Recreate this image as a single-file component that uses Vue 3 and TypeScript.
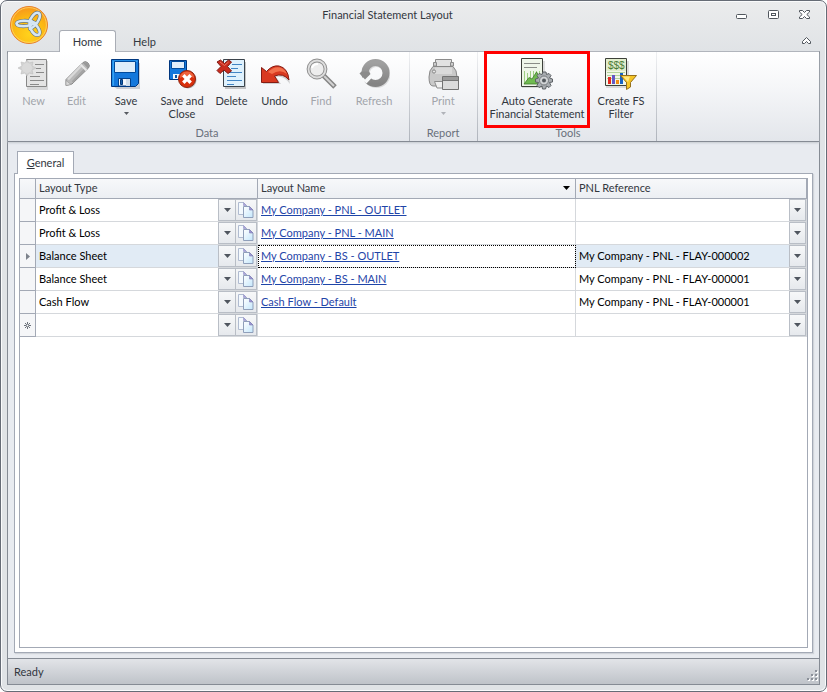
<script setup lang="ts">
import { ref } from 'vue'

interface Command {
  id: string
  lines: string[]
  size: 'small' | 'mid' | 'wide' | 'large' | 'tool'
  disabled?: boolean
  menu?: boolean
  highlighted?: boolean
}
interface Group {
  title: string
  commands: Command[]
}
interface Row {
  type: string
  name: string
  reference: string
}

const groups: Group[] = [
  {
    title: 'Data',
    commands: [
      { id: 'new', lines: ['New'], size: 'small', disabled: true },
      { id: 'edit', lines: ['Edit'], size: 'small', disabled: true },
      { id: 'save', lines: ['Save'], size: 'wide', menu: true },
      { id: 'save-close', lines: ['Save and', 'Close'], size: 'wide' },
      { id: 'delete', lines: ['Delete'], size: 'small' },
      { id: 'undo', lines: ['Undo'], size: 'small' },
      { id: 'find', lines: ['Find'], size: 'mid', disabled: true },
      { id: 'refresh', lines: ['Refresh'], size: 'wide', disabled: true },
    ],
  },
  {
    title: 'Report',
    commands: [{ id: 'print', lines: ['Print'], size: 'wide', disabled: true, menu: true }],
  },
  {
    title: 'Tools',
    commands: [
      { id: 'generate', lines: ['Auto Generate', 'Financial Statement'], size: 'large', highlighted: true },
      { id: 'filter', lines: ['Create FS', 'Filter'], size: 'tool' },
    ],
  },
]

const types = ['Profit & Loss', 'Balance Sheet', 'Cash Flow']
const references = ['My Company - PNL - FLAY-000001', 'My Company - PNL - FLAY-000002']

const rows = ref<Row[]>([
  { type: 'Profit & Loss', name: 'My Company - PNL - OUTLET', reference: '' },
  { type: 'Profit & Loss', name: 'My Company - PNL - MAIN', reference: '' },
  { type: 'Balance Sheet', name: 'My Company - BS - OUTLET', reference: references[1] },
  { type: 'Balance Sheet', name: 'My Company - BS - MAIN', reference: references[0] },
  { type: 'Cash Flow', name: 'Cash Flow - Default', reference: references[0] },
  { type: '', name: '', reference: '' },
])
const current = ref(2)
</script>

<template>
  <div class="window">
    <header class="titlebar">
      <button class="app-button" type="button" aria-label="Application menu">
        <svg width="40" height="40" viewBox="0 0 40 40">
          <defs>
            <radialGradient id="orb" cx="50%" cy="75%" r="75%">
              <stop offset="0" stop-color="#ffd21c" />
              <stop offset="0.6" stop-color="#fcb813" />
              <stop offset="1" stop-color="#f7941d" />
            </radialGradient>
          </defs>
          <circle cx="20" cy="20" r="18.500" fill="url(#orb)" stroke="#e8812c" />
          <circle cx="20" cy="20" r="17.400" fill="none" stroke="#ffd768" stroke-width="0.800" />
          <g fill="none" stroke-linejoin="round">
            <g stroke="#66767e" stroke-width="3.800">
              <path d="M26 18C19 14.500 8 15.500 7.500 18.500C8 22 19 22.500 26 18Z" />
              <path d="M21 21C18.500 15 26 6.500 29.500 8C33 10 29 20 21 24Z" />
              <path d="M22 16C28 19 32.500 27 30 29.500C26 31.500 19 25 22 16Z" />
            </g>
            <g stroke="#d5e6f4" stroke-width="2.600">
              <path d="M26 18C19 14.500 8 15.500 7.500 18.500C8 22 19 22.500 26 18Z" />
              <path d="M21 21C18.500 15 26 6.500 29.500 8C33 10 29 20 21 24Z" />
              <path d="M22 16C28 19 32.500 27 30 29.500C26 31.500 19 25 22 16Z" />
            </g>
          </g>
        </svg>
      </button>
      <h1 class="title">Financial Statement Layout</h1>
      <div class="window-controls">
        <button type="button" aria-label="Minimize">
          <svg width="13" height="12" viewBox="0 0 13 12"><rect x="0.500" y="4.500" width="10" height="4" rx="1" fill="#fff" stroke="#50565d" /></svg>
        </button>
        <button type="button" aria-label="Maximize">
          <svg width="13" height="12" viewBox="0 0 13 12" fill="#fff" stroke="#50565d"><rect x="1.500" y="0.500" width="10" height="8" rx="1" /><rect x="4.500" y="3.500" width="4" height="2" /></svg>
        </button>
        <button type="button" aria-label="Close">
          <svg width="13" height="12" viewBox="0 0 13 12"><path d="M1.500 0.500H4.500L6.500 2.500L8.500 0.500H11.500V2L8.800 4.500L11.500 7V8.500H8.500L6.500 6.500L4.500 8.500H1.500V7L4.200 4.500L1.500 2Z" fill="#fff" stroke="#50565d" /></svg>
        </button>
      </div>
    </header>

    <nav class="ribbon-tabs">
      <button class="ribbon-tab active" type="button">Home</button>
      <button class="ribbon-tab" type="button">Help</button>
      <button class="collapse" type="button" aria-label="Collapse ribbon">
        <svg width="11" height="9" viewBox="0 0 11 9"><path d="M1.500 5.500L5.500 1.500L9.500 5.500V7.500H7.500L5.500 5.500L3.500 7.500H1.500Z" fill="#fff" stroke="#50565d" /></svg>
      </button>
    </nav>

    <div class="frame">
      <section class="ribbon">
        <div v-for="group in groups" :key="group.title" class="group">
          <div class="commands">
            <button
              v-for="command in group.commands"
              :key="command.id"
              type="button"
              class="command"
              :class="[command.size, { highlighted: command.highlighted }]"
              :disabled="command.disabled"
            >
              <svg v-if="command.id === 'new'" width="32" height="32" viewBox="0 0 32 32">
                <path d="M9 3H30V32H9Z" fill="#b9b9b9" opacity="0.5" />
                <path d="M8.500 1.500H28.500V28.500H8.500Z" fill="#e4e4e4" stroke="#878787" />
                <path d="M17 6.500H26M18 10.500H23M18 14.500H26M12 18.500H22M12 22.500H26M12 26.500H21" stroke="#8a8a8a" />
                <path d="M9 2L11 5L15 4L14 8L18 10L14 12L15 16L11 15L9 18L7 15L3 16L4 12L0 10L4 8L3 4L7 5Z" fill="#d2d2d2" stroke="#bdbdbd" stroke-width="0.600" />
                <circle cx="9" cy="10" r="5" fill="#dadada" />
              </svg>
              <svg v-else-if="command.id === 'edit'" width="32" height="32" viewBox="0 0 32 32">
                <path d="M22 4.500Q24.500 2.500 27 5Q29.500 7.500 27.500 10L11 26L5 27.500L5 21.500Z" fill="#b9b9b9" stroke="#868686" stroke-linejoin="round" />
                <path d="M20 8L7 21.500" stroke="#d9d9d9" stroke-width="2.500" />
                <path d="M24 11L11.500 24" stroke="#a3a3a3" stroke-width="2" />
                <path d="M19.500 6.500L25.500 12.500" stroke="#e8e8e8" stroke-width="2" />
                <path d="M22 5Q25 3 27 6Q29 8 27 10.500Z" fill="#999" />
                <path d="M5 22.500L10 26.500L5 27.500Z" fill="#d8d8d8" stroke="#999" stroke-width="0.600" />
              </svg>
              <svg v-else-if="command.id === 'save'" width="32" height="32" viewBox="0 0 32 32">
                <path d="M3 5H30V31H7L3 28Z" fill="#8d949e" opacity="0.4" />
                <path d="M1.500 1.500H28.500V25.500L25.500 28.500H1.500Z" fill="#1478dc" stroke="#00377f" />
                <path d="M2.500 2.500H27.500V4H4V27.500H2.500Z" fill="#35a3f4" />
                <path d="M4.500 3.500H25.500V14.500H4.500Z" fill="#deedfa" stroke="#004a9c" />
                <path d="M8.500 20.500H20.500V28H8.500Z" fill="#f1f6fc" stroke="#00418c" />
                <path d="M10.500 21.500H12.500V26.500H10.500Z" fill="#155fac" stroke="#003779" />
                <path d="M16 21H20V28H16Z" fill="#cfdeec" />
              </svg>
              <svg v-else-if="command.id === 'save-close'" width="32" height="32" viewBox="0 0 32 32">
                <path d="M3.500 2.500H20.500V21.500H3.500Z" fill="#1478dc" stroke="#00377f" />
                <path d="M5.500 3.500H18.500V10.500H5.500Z" fill="#e0eefb" stroke="#004a9c" />
                <path d="M7 16H16V21H7Z" fill="#f2f7fc" />
                <path d="M9 17H11V20H9Z" fill="#07549f" />
                <circle cx="22" cy="22" r="8.500" fill="#777" opacity="0.5" />
                <circle cx="21" cy="21" r="8.500" fill="#d92f0c" stroke="#8e2410" />
                <path d="M14 20Q14 14 21 13.500Q28 14 28 20Q21 16 14 20" fill="#f67850" opacity="0.7" />
                <path d="M18.500 18.500L23.500 23.500M23.500 18.500L18.500 23.500" stroke="#fff" stroke-width="3.400" stroke-linecap="square" />
              </svg>
              <svg v-else-if="command.id === 'delete'" width="32" height="32" viewBox="0 0 32 32">
                <path d="M9 4H30V31H9Z" fill="#777" opacity="0.4" />
                <path d="M7.500 1.500H28.500V28.500H7.500Z" fill="#dff1fd" stroke="#3a434b" />
                <path d="M16 6.500H26M15 10.500H22M11 14.500H26M11 18.500H20M11 22.500H26M11 26.500H18" stroke="#4285c4" />
                <path d="M1 4L4.500 2L8.500 5.500L12.500 2L15.500 4L11.500 8.500L15.500 13L12 15.500L8 12L4 15.500L1 12.500L5 8.500Z" fill="#c92c1f" stroke="#7e1b14" />
                <path d="M4 4L8.500 7.500L12.500 4" fill="none" stroke="#ec705d" />
              </svg>
              <svg v-else-if="command.id === 'undo'" width="32" height="32" viewBox="0 0 32 32">
                <path d="M4 11L9 15Q14 9 21 10Q30 13 31 26Q25 17 17 19L22 26H4Z" fill="#888" opacity="0.35" />
                <path d="M2.500 9.500L7.500 13.500Q13 7 20 8Q29 10 30 22Q24 14.500 15.500 18L19.500 24.500H2.500Z" fill="#d93920" stroke="#861c13" />
                <path d="M9 14Q15 8 21 9.500Q26 11 28 16Q21 10.500 13 16Z" fill="#f3714d" />
              </svg>
              <svg v-else-if="command.id === 'find'" width="32" height="32" viewBox="0 0 32 32" fill="none">
                <path d="M18 17L30 29" stroke="#858585" stroke-width="5" />
                <path d="M18 17L29 28" stroke="#d3d3d3" stroke-width="2" />
                <circle cx="12" cy="11" r="8.500" fill="#ededed" stroke="#8f8f8f" stroke-width="3.800" />
                <circle cx="12" cy="11" r="8.500" stroke="#dedede" stroke-width="1.800" />
                <path d="M7 10Q8 6 13 6" stroke="#fff" stroke-width="2" />
              </svg>
              <svg v-else-if="command.id === 'refresh'" width="32" height="32" viewBox="0 0 32 32" fill="none">
                <defs>
                  <linearGradient id="ring" x1="0" y1="0" x2="0" y2="1">
                    <stop offset="0" stop-color="#a0a0a0" />
                    <stop offset="1" stop-color="#848484" />
                  </linearGradient>
                </defs>
                <circle cx="18.500" cy="16" r="10.500" stroke="#999" stroke-width="7" opacity="0.300" />
                <circle cx="17.500" cy="15" r="10.500" stroke="url(#ring)" stroke-width="7" />
                <path d="M2 20.500L13 16.500L15 18.500L8.500 25.500Z" fill="#f8f9fa" />
                <path d="M1.500 15.500L3.500 13.500H11L12.500 16L7 21.500Z" fill="#8b8b8b" />
              </svg>
              <svg v-else-if="command.id === 'print'" width="32" height="32" viewBox="0 0 32 32">
                <path d="M8.500 1.500H24.500V9H8.500Z" fill="#e2e2e2" stroke="#8b8b8b" />
                <path d="M6.500 4.500H9.500V8H6.500ZM23.500 4.500H26.500V8H23.500Z" fill="#ccc" stroke="#8c8c8c" />
                <path d="M6 8.500H26Q30 12 30 19Q30 28 26 28H6Q2 28 2 19Q2 12 6 8.500Z" fill="#c9c9c9" stroke="#888" />
                <path d="M8 9.500H25V16H8Z" fill="#dadada" />
                <path d="M7.500 23.500H16V30H10Z" fill="#efefef" stroke="#8d8d8d" />
                <circle cx="7" cy="13.500" r="1.600" fill="#e5e5e5" stroke="#888" />
                <path d="M15.500 18.500H31.500V31.500H15.500Z" fill="#dbdbdb" stroke="#727272" />
                <path d="M16 19H31V22H16Z" fill="#9a9a9a" />
                <path d="M16 22.500H31" stroke="#777" />
              </svg>
              <svg v-else-if="command.id === 'generate'" width="32" height="32" viewBox="0 0 32 32">
                <path d="M1 3H24V30H1Z" fill="#999" opacity="0.300" />
                <path d="M0.500 0.500H21.500V28.500H0.500Z" fill="#eff6e9" stroke="#3c4039" />
                <path d="M3 5.500H19M3 9.500H16" stroke="#8a8d87" />
                <path d="M3.500 13V26M6.500 15V26M9.500 13V26M12.500 13V26M15.500 13V26M18.500 13V26" stroke="#9fce83" />
                <path d="M3 26L8 19.500L11 21L15.500 14L20 21V26Z" fill="#6fbb50" stroke="#41792c" stroke-width="0.800" />
                <path d="M22 14H25L25.500 16.500L28 15.500L30 17.500L28.500 20L31.500 21V24L28.500 24.500L30 27.500L28 29.500L25.500 28L24.500 31H21.500L21 28L18 29.500L16 27.500L17.500 24.500L14.500 24V21L17.500 20L16 17.500L18 15.500L21 16.500Z" fill="#a8acb0" stroke="#5d6266" />
                <circle cx="23" cy="22.500" r="4.500" fill="#d0d3d5" stroke="#75797d" />
                <circle cx="23" cy="22.500" r="2" fill="#54595e" />
              </svg>
              <svg v-else width="32" height="32" viewBox="0 0 32 32">
                <path d="M1 3H24V30H1Z" fill="#999" opacity="0.300" />
                <path d="M0.500 0.500H21.500V27.500H0.500Z" fill="#f1f7e8" stroke="#3d4139" />
                <path d="M1 1H21V13H1Z" fill="#e1edcc" />
                <text x="3" y="11" class="dollars">$$$</text>
                <path d="M2 14.500H20M2 17.500H20M2 20.500H20" stroke="#b5d39c" />
                <path d="M3 19H6V26H3Z" fill="#e52920" />
                <path d="M7 17H10V26H7Z" fill="#6358c7" />
                <path d="M11 22H14V26H11Z" fill="#f18b14" />
                <path d="M15 15H18V26H15Z" fill="#1663c4" />
                <path d="M15.500 17.500H31.500L25.500 24.500V29L21.500 31.500V24.500Z" fill="#f5c526" stroke="#96701b" />
                <path d="M18 18.500H25L23 24Z" fill="#ffe982" />
              </svg>
              <span v-for="line in command.lines" :key="line" class="line">{{ line }}</span>
              <svg v-if="command.menu" class="menu-arrow" width="5" height="13" viewBox="0 0 5 13"><path d="M0 5H5L2.500 8Z" fill="currentColor" /></svg>
            </button>
          </div>
          <div class="group-title">{{ group.title }}</div>
        </div>
      </section>

      <main class="content">
        <div class="page-tabs">
          <button class="page-tab" type="button"><u>G</u>eneral</button>
        </div>
        <div class="panel">
          <div class="grid">
            <table>
              <colgroup>
                <col class="col-marker" />
                <col class="col-type" />
                <col class="col-name" />
                <col />
              </colgroup>
              <thead>
                <tr>
                  <th aria-label="Row state"></th>
                  <th>Layout Type</th>
                  <th>
                    <div class="sorted">
                      Layout Name
                      <svg width="7" height="4" viewBox="0 0 7 4"><path d="M0 0H7L3.500 4Z" fill="#000" /></svg>
                    </div>
                  </th>
                  <th>PNL Reference</th>
                </tr>
              </thead>
              <tbody>
                <tr v-for="(row, index) in rows" :key="index" :class="{ current: index === current }" @click="current = index">
                  <td class="marker">
                    <svg v-if="index === current" width="4" height="7" viewBox="0 0 4 7"><path d="M0 0L4 3.500L0 7Z" fill="#7d838c" /></svg>
                    <svg v-else-if="!row.type" width="7" height="7" viewBox="0 0 7 7"><path d="M3.500 0V7M0 3.500H7M1 1L6 6M6 1L1 6" stroke="#6b717a" /><circle cx="3.500" cy="3.500" r="1" fill="#fff" /></svg>
                  </td>
                  <td>
                    <div class="cell">
                      <div class="picker">
                        <select v-model="row.type" aria-label="Layout Type">
                          <option value=""></option>
                          <option v-for="item in types" :key="item">{{ item }}</option>
                        </select>
                        <span class="drop"><svg width="7" height="4" viewBox="0 0 7 4"><path d="M0 0H7L3.500 4Z" fill="#50565f" /></svg></span>
                      </div>
                      <button class="copy" type="button" aria-label="Copy layout">
                        <svg width="16" height="16" viewBox="0 0 16 16">
                          <defs>
                            <linearGradient id="sheet" x1="0" y1="0" x2="1" y2="1">
                              <stop offset="0" stop-color="#fff" />
                              <stop offset="1" stop-color="#c4e7fc" />
                            </linearGradient>
                          </defs>
                          <path d="M0.500 0.500H5.500L8.500 3.500V12.500H0.500Z" fill="#f4f9fd" stroke="#b0bbd0" />
                          <path d="M5.500 0.500V3.500H8.500Z" fill="#aaa4dc" stroke="#9594c6" stroke-width="0.600" />
                          <path d="M5.500 4.500H11.500L15 8V15.500H5.500Z" fill="url(#sheet)" stroke="#8f9fba" />
                          <path d="M11.500 4.500V8H15Z" fill="#9a94d2" stroke="#7f7db3" stroke-width="0.600" />
                        </svg>
                      </button>
                    </div>
                  </td>
                  <td class="name"><a v-if="row.name" href="#">{{ row.name }}</a></td>
                  <td>
                    <div class="cell">
                      <div class="picker">
                        <select v-model="row.reference" aria-label="PNL Reference">
                          <option value=""></option>
                          <option v-for="item in references" :key="item">{{ item }}</option>
                        </select>
                        <span class="drop end"><svg width="7" height="4" viewBox="0 0 7 4"><path d="M0 0H7L3.500 4Z" fill="#50565f" /></svg></span>
                      </div>
                    </div>
                  </td>
                </tr>
              </tbody>
            </table>
          </div>
        </div>
      </main>

      <footer class="status">
        <span>Ready</span>
        <svg width="11" height="11" viewBox="0 0 11 11">
          <path d="M9 1H11V3H9ZM5 5H7V7H5ZM9 5H11V7H9ZM1 9H3V11H1ZM5 9H7V11H5ZM9 9H11V11H9Z" fill="#fff" />
          <path d="M8 0H10V2H8ZM4 4H6V6H4ZM8 4H10V6H8ZM0 8H2V10H0ZM4 8H6V10H4ZM8 8H10V10H8Z" fill="#8b9099" />
        </svg>
      </footer>
    </div>
  </div>
</template>

<style>
body {
  background: #fff;
}
</style>

<style scoped>
.window,
.window * {
  box-sizing: border-box;
}
.window {
  display: flex;
  flex-direction: column;
  min-height: 100vh;
  padding: 0 6px 6px;
  border: 1px solid #666c76;
  border-radius: 7px;
  box-shadow: inset 0 0 0 1px #fafbfc;
  background: linear-gradient(#ebeced, #e0e3e6 50px);
  color: #32373e;
  font: 11px/13px Lato, "Liberation Sans", sans-serif;
}
button {
  padding: 0;
  border: 0;
  background: none;
  color: inherit;
  font: inherit;
}
svg {
  display: block;
}
.titlebar {
  display: grid;
  grid-template-columns: 80px 1fr 132px;
  height: 29px;
}
.app-button {
  z-index: 1;
  width: 40px;
  height: 40px;
  margin: 4px 2px;
}
.title {
  margin: 7px 0 0;
  font: inherit;
  text-align: center;
}
.window-controls {
  display: flex;
  justify-content: flex-end;
  gap: 18px;
  padding: 9px 9px 0 0;
}
.window-controls button {
  height: 12px;
}
.ribbon-tabs {
  display: flex;
  height: 21px;
  padding-left: 52px;
}
.ribbon-tab {
  width: 57px;
  padding-top: 1px;
}
.ribbon-tab.active {
  z-index: 1;
  height: 22px;
  padding: 0;
  border: 1px solid #a9adb5;
  border-bottom: 0;
  border-radius: 3px 3px 0 0;
  background: #fff;
}
.collapse {
  margin: 0 8px 0 auto;
}
.frame {
  display: flex;
  flex: 1;
  flex-direction: column;
  border: 1px solid #858b94;
  border-top-color: #b0b4bb;
  background: #e8ebf0;
}
.ribbon {
  display: flex;
  height: 90px;
  border-bottom: 1px solid #858b94;
  background: linear-gradient(#fff, #f5f6f8 40%, #e3e6eb);
  box-shadow: 0 1px 2px #c5c9cf;
}
.group {
  display: flex;
  flex-direction: column;
  padding: 0 4px;
  border-right: 1px solid;
  border-image: linear-gradient(#f0f1f3, #aeb3bb) 1;
}
.group:nth-child(1) {
  padding-right: 7px;
}
.group:nth-child(2) {
  padding: 0 6px 0 5px;
}
.group:nth-child(3) {
  padding-left: 6px;
}
.commands {
  display: flex;
  height: 74px;
}
.command {
  display: flex;
  flex-direction: column;
  align-items: center;
  height: 76px;
  padding-top: 6px;
  color: #32373e;
  white-space: nowrap;
}
.command:disabled {
  color: #a2a5ab;
}
.command > svg:first-child {
  margin-bottom: 4px;
}
.command.small {
  width: 43px;
}
.command.mid {
  width: 50px;
}
.command.wide {
  width: 56px;
}
.command.tool {
  width: 62px;
}
.command.large {
  width: 106px;
}
.command.highlighted {
  height: 77px;
  margin-top: -1px;
  padding-top: 4px;
  border: 3px solid #f00;
}
.menu-arrow {
  opacity: 0.8;
}
.dollars {
  fill: #4a7a35;
  font: 10px "Liberation Sans", sans-serif;
}
.group-title {
  color: #69707b;
  text-align: center;
}
.content {
  display: flex;
  flex: 1;
  flex-direction: column;
  padding: 9px 6px 5px;
}
.page-tabs {
  display: flex;
  height: 22px;
  padding-left: 3px;
}
.page-tab {
  z-index: 1;
  width: 57px;
  height: 23px;
  padding-bottom: 2px;
  border: 1px solid #a3a9b5;
  border-bottom: 0;
  background: #fff;
}
.panel {
  display: flex;
  flex: 1;
  padding: 4px;
  border: 1px solid #a3a9b5;
  background: #fff;
  box-shadow: 1px 1px 1px #cfd3d9;
}
.grid {
  flex: 1;
  border: 1px solid #a3a9b5;
}
table {
  width: 100%;
  border-collapse: separate;
  border-spacing: 0;
  table-layout: fixed;
}
.col-marker {
  width: 16px;
}
.col-type {
  width: 222px;
}
.col-name {
  width: 318px;
}
th {
  height: 20px;
  padding: 0 3px 2px;
  border-right: 1px solid #a3a9b5;
  border-bottom: 1px solid #a3a9b5;
  background: linear-gradient(#f7f8fa, #eceff3);
  color: #32373e;
  font-weight: normal;
  text-align: left;
}
.sorted {
  display: flex;
  align-items: center;
  justify-content: space-between;
  padding-right: 2px;
}
td {
  height: 23px;
  padding: 0;
  border-right: 1px solid #d5d8dc;
  border-bottom: 1px solid #d5d8dc;
  color: #000;
}
.marker {
  border-color: #a3a9b5;
  background: #f5f6f8;
}
.marker svg {
  margin: 0 auto;
}
.cell {
  display: flex;
  height: 22px;
}
.picker {
  display: grid;
  flex: 1;
  grid-template-columns: 1fr 17px;
}
select {
  grid-area: 1 / 1 / 2 / 3;
  min-width: 0;
  padding: 0 17px 2px 3px;
  border: 0;
  appearance: none;
  background: transparent;
  color: inherit;
  font: inherit;
}
.drop,
.copy {
  display: flex;
  align-items: center;
  justify-content: center;
  border: 1px solid #b9bec6;
  background: linear-gradient(#f7f8f9, #e6e9ed);
}
.drop {
  grid-area: 1 / 2;
  border-right: 0;
  pointer-events: none;
}
.drop.end {
  border-right: 1px solid #b9bec6;
}
.copy {
  width: 22px;
}
.current td:not(.marker) {
  background: #e1ebf5;
}
.name {
  padding: 0 3px 2px;
}
.current td.name {
  background: #fff;
  outline: 1px dotted #000;
  outline-offset: -1px;
}
a {
  color: #1f45a8;
}
.status {
  display: flex;
  justify-content: space-between;
  height: 26px;
  padding: 6px 1px 3px 6px;
  border-top: 1px solid #858b94;
  background: linear-gradient(#e2e4e8, #bfc3c9);
}
.status svg {
  align-self: flex-end;
}
</style>
